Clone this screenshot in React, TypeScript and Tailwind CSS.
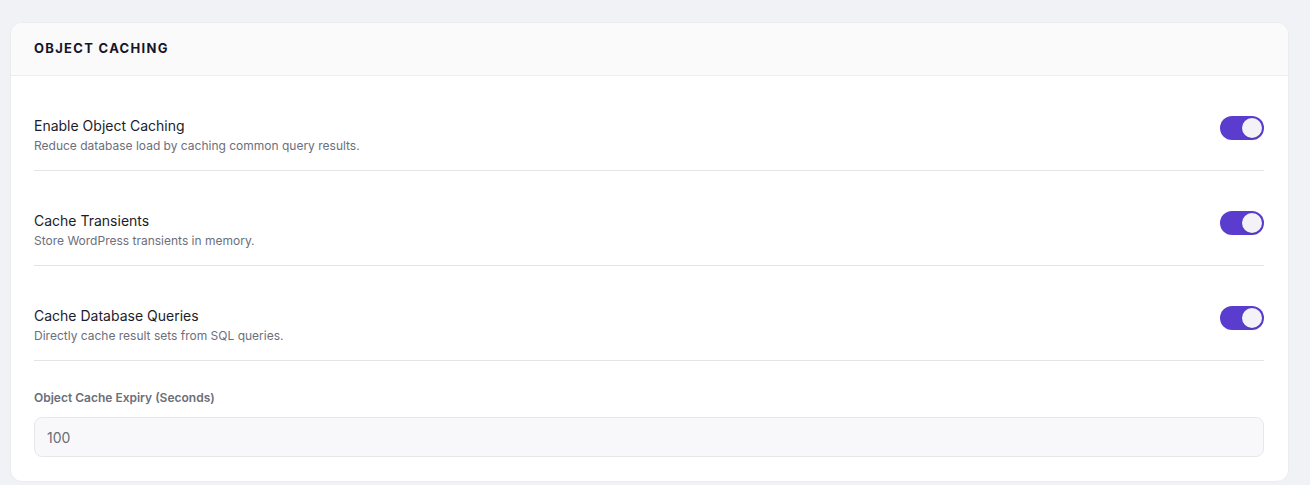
import { useState } from "react";

const ROWS = [
  {
    id: "object",
    label: "Enable Object Caching",
    desc: "Reduce database load by caching common query results.",
  },
  {
    id: "transients",
    label: "Cache Transients",
    desc: "Store WordPress transients in memory.",
  },
  {
    id: "queries",
    label: "Cache Database Queries",
    desc: "Directly cache result sets from SQL queries.",
  },
];

export default function App() {
  const [on, setOn] = useState<Record<string, boolean>>({
    object: true,
    transients: true,
    queries: true,
  });
  const [expiry, setExpiry] = useState("100");

  return (
    <div className="min-h-[485px] bg-[#f1f2f6] px-[10px] pt-[22px] pb-1 font-['Inter',sans-serif]">
      <section className="w-[1279px] rounded-xl border border-[#ebecf0] bg-white overflow-hidden">
        {/* Header */}
        <div className="h-[53px] flex items-center pl-[23px] pr-6 bg-[#fafafb] border-b border-[#ededf1]">
          <h2 className="text-[13px] font-bold tracking-[0.1em] text-[#15152a] uppercase">
            Object Caching
          </h2>
        </div>

        <div className="pl-[23px] pr-6 pt-6 pb-6">
          <div className="flex flex-col gap-6">
            {ROWS.map((r) => (
              <div
                key={r.id}
                className="flex items-start justify-between pt-4 pb-4 border-b border-[#e3e4e8]"
              >
                <div>
                  <div className="text-[14px] leading-5 text-[#1c1c2b]">{r.label}</div>
                  <div className="text-[12px] leading-4 mt-0.5 text-[#6b6f7b]">{r.desc}</div>
                </div>
                <Toggle
                  checked={on[r.id]}
                  onChange={() => setOn((s) => ({ ...s, [r.id]: !s[r.id] }))}
                />
              </div>
            ))}
          </div>

          <div className="pt-[29px]">
            <label className="block text-[12px] leading-4 font-semibold text-[#6b6e78] mb-[11px]">
              Object Cache Expiry (Seconds)
            </label>
            <input
              value={expiry}
              onChange={(e) => setExpiry(e.target.value)}
              className="w-full h-10 rounded-lg border border-[#e6e7eb] bg-[#f8f8fa] px-3 text-[14px] text-[#6b6e78] outline-none"
            />
          </div>
        </div>
      </section>
    </div>
  );
}

function Toggle({ checked, onChange }: { checked: boolean; onChange: () => void }) {
  return (
    <button
      onClick={onChange}
      className={`relative w-11 h-6 rounded-full shrink-0 ${checked ? "bg-[#5a3dcf]" : "bg-[#d4d5db]"}`}
    >
      <span
        className={`absolute top-[2px] w-5 h-5 rounded-full bg-[#f2f2f7] shadow-sm ${checked ? "left-[22px]" : "left-[2px]"}`}
      />
    </button>
  );
}
